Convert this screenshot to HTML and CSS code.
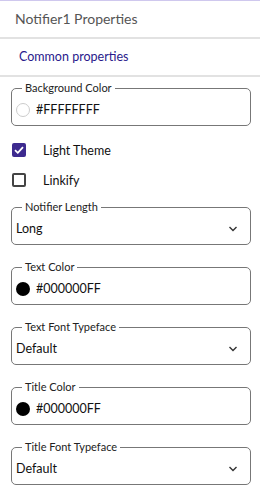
FILE: index.html
```html
<!DOCTYPE html>
<html lang="en">
<head>
  <meta charset="UTF-8" />
  <meta name="viewport" content="width=device-width, initial-scale=1.0"/>
  <title>Notifier1 Properties</title>
  <link rel="stylesheet" href="styles.css">
</head>
<body>

<div class="panel">
  <div class="panel-title">Notifier1 Properties</div>
  <div class="panel-tab">Common properties</div>

  <div class="props">
    <fieldset class="field">
      <legend>Background Color</legend>
      <div class="field-row">
        <span class="swatch swatch-white"></span>
        <span>#FFFFFFFF</span>
      </div>
    </fieldset>

    <div class="checks">
      <label class="check">
        <span class="box box-on">
          <svg width="10" height="8" viewBox="0 0 10 8"><path d="M1 4.2 L3.8 6.8 L9 1.2" fill="none" stroke="#fff" stroke-width="1.8"/></svg>
        </span>
        Light Theme
      </label>
      <label class="check">
        <span class="box"></span>
        Linkify
      </label>
    </div>

    <fieldset class="field">
      <legend>Notifier Length</legend>
      <div class="field-row">
        <span class="grow">Long</span>
        <svg class="chev" width="10" height="6" viewBox="0 0 10 6"><path d="M1.5 1 L5 4.5 L8.5 1" fill="none" stroke="#333" stroke-width="1.4"/></svg>
      </div>
    </fieldset>

    <fieldset class="field">
      <legend>Text Color</legend>
      <div class="field-row">
        <span class="swatch swatch-black"></span>
        <span>#000000FF</span>
      </div>
    </fieldset>

    <fieldset class="field">
      <legend>Text Font Typeface</legend>
      <div class="field-row">
        <span class="grow">Default</span>
        <svg class="chev" width="10" height="6" viewBox="0 0 10 6"><path d="M1.5 1 L5 4.5 L8.5 1" fill="none" stroke="#333" stroke-width="1.4"/></svg>
      </div>
    </fieldset>

    <fieldset class="field">
      <legend>Title Color</legend>
      <div class="field-row">
        <span class="swatch swatch-black"></span>
        <span>#000000FF</span>
      </div>
    </fieldset>

    <fieldset class="field">
      <legend>Title Font Typeface</legend>
      <div class="field-row">
        <span class="grow">Default</span>
        <svg class="chev" width="10" height="6" viewBox="0 0 10 6"><path d="M1.5 1 L5 4.5 L8.5 1" fill="none" stroke="#333" stroke-width="1.4"/></svg>
      </div>
    </fieldset>
  </div>
</div>

</body>
</html>
```

FILE: styles.css
```css
body {
  margin: 0;
  font-family: Lato, "Open Sans", sans-serif;
  background: #fff;
  color: #111;
}
.panel {
  border-top: 1px solid #cfc8ee;
}
.panel-title {
  height: 36px;
  line-height: 36px;
  padding-left: 15px;
  font-size: 14px;
  color: #555;
  border-bottom: 2px solid #e2e2e2;
}
.panel-tab {
  height: 36px;
  line-height: 36px;
  padding-left: 19px;
  font-size: 12.5px;
  color: #2a1a8c;
  border-bottom: 2px solid #e2e2e2;
}
.props {
  padding: 6px 9px 0 11px;
}
.field {
  margin: 0 0 17px 0;
  padding: 0 4px 0 4px;
  height: 43px;
  border: 1px solid #777;
  border-radius: 5px;
  box-sizing: border-box;
}
.field legend {
  font-size: 11px;
  color: #222;
  padding: 0 3px;
  margin-left: 6px;
  line-height: 10px;
}
.field-row {
  display: flex;
  align-items: center;
  height: 33px;
  font-size: 12.5px;
  color: #111;
}
.grow {
  flex: 1;
}
.chev {
  margin-right: 8px;
}
.swatch {
  width: 14px;
  height: 14px;
  border-radius: 50%;
  margin-right: 6px;
  box-sizing: border-box;
}
.swatch-white {
  border: 1px solid #ccc;
  background: #fff;
}
.swatch-black {
  background: #000;
}
.checks {
  margin: -8px 0 7px 0;
}
.check {
  display: flex;
  align-items: center;
  height: 30px;
  font-size: 12.5px;
  color: #111;
  margin-left: 1px;
}
.box {
  width: 14px;
  height: 14px;
  box-sizing: border-box;
  border: 2px solid #444;
  border-radius: 2px;
  margin-right: 17px;
  display: flex;
  align-items: center;
  justify-content: center;
}
.box-on {
  background: #3d2a8f;
  border-color: #3d2a8f;
}
```
